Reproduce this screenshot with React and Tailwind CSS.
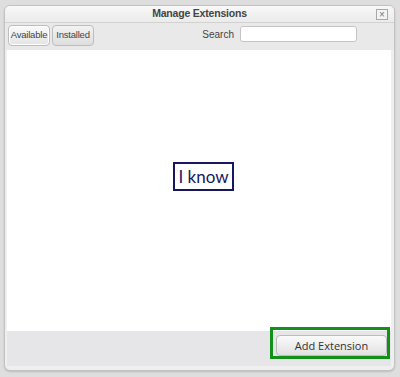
export default function App() {
  return (
    <div className="w-[400px] h-[377px] bg-[#dedede] pt-[5px] pl-[4px] font-['Liberation_Sans',Arial,sans-serif]">
      <div className="w-[391px] h-[366px] rounded-[6px] border border-[#c2c2c2] bg-[#efefef] shadow-[0_1px_2px_rgba(0,0,0,0.15)] flex flex-col overflow-hidden">
        {/* title bar */}
        <div className="relative h-[17px] flex items-center justify-center bg-gradient-to-b from-[#f8f8f8] to-[#ebebeb] border-b border-[#d2d2d2]">
          <span className="text-[10.5px] font-bold text-[#444] tracking-[-0.2px]">Manage Extensions</span>
          <div className="absolute right-[6px] top-[3px] w-[12px] h-[11px] border border-[#a8a8a8] bg-[#f4f4f4] flex items-center justify-center text-[#777] text-[10px] leading-none">
            ×
          </div>
        </div>

        {/* toolbar */}
        <div className="h-[27px] flex items-start pt-[2px] pl-[3px] pr-[37px] bg-[#e9e9e9]">
          <div className="flex gap-[2px]">
            <button className="h-[21px] w-[42px] rounded-[4px] border border-[#bdbdbd] bg-gradient-to-b from-[#fbfbfb] to-[#e4e4e4] text-[9.5px] tracking-[-0.2px] text-[#444] shadow-[inset_0_0_0_1px_#fff]">
              Available
            </button>
            <button className="h-[21px] w-[42px] rounded-[4px] border border-[#bdbdbd] bg-gradient-to-b from-[#f3f3f3] to-[#dedede] text-[9.5px] tracking-[-0.2px] text-[#444]">
              Installed
            </button>
          </div>
          <div className="ml-auto flex items-center gap-[6px] pt-[1px]">
            <span className="text-[10px] text-[#444]">Search</span>
            <div className="w-[117px] h-[16px] rounded-[3px] border border-[#c4c4c4] bg-white" />
          </div>
        </div>

        {/* body */}
        <div className="flex-1 flex flex-col pl-[2px] pr-[3px] pb-[4px]">
          <div className="flex-1 bg-white pl-[166px] pt-[112px]">
            <div className="w-[61px] h-[29px] border-2 border-[#17175f] flex items-center justify-center">
              <span className="font-['Lato',sans-serif] text-[17px] text-[#17175f] leading-none">I know</span>
            </div>
          </div>
          <div className="h-[35px] bg-[#e6e6e8] flex justify-end items-start pr-[1px]">
            <div className="-mt-[4px] w-[120px] h-[32px] border-[3px] border-[#13901a] pl-[3px] pt-[3px]">
              <button className="w-[111px] h-[21px] rounded-[4px] border border-[#bcbcbc] bg-gradient-to-b from-[#fafafa] to-[#e2e2e2] text-[11px] text-[#333] font-['Open_Sans',sans-serif] leading-none">
                Add Extension
              </button>
            </div>
          </div>
        </div>
      </div>
    </div>
  );
}
